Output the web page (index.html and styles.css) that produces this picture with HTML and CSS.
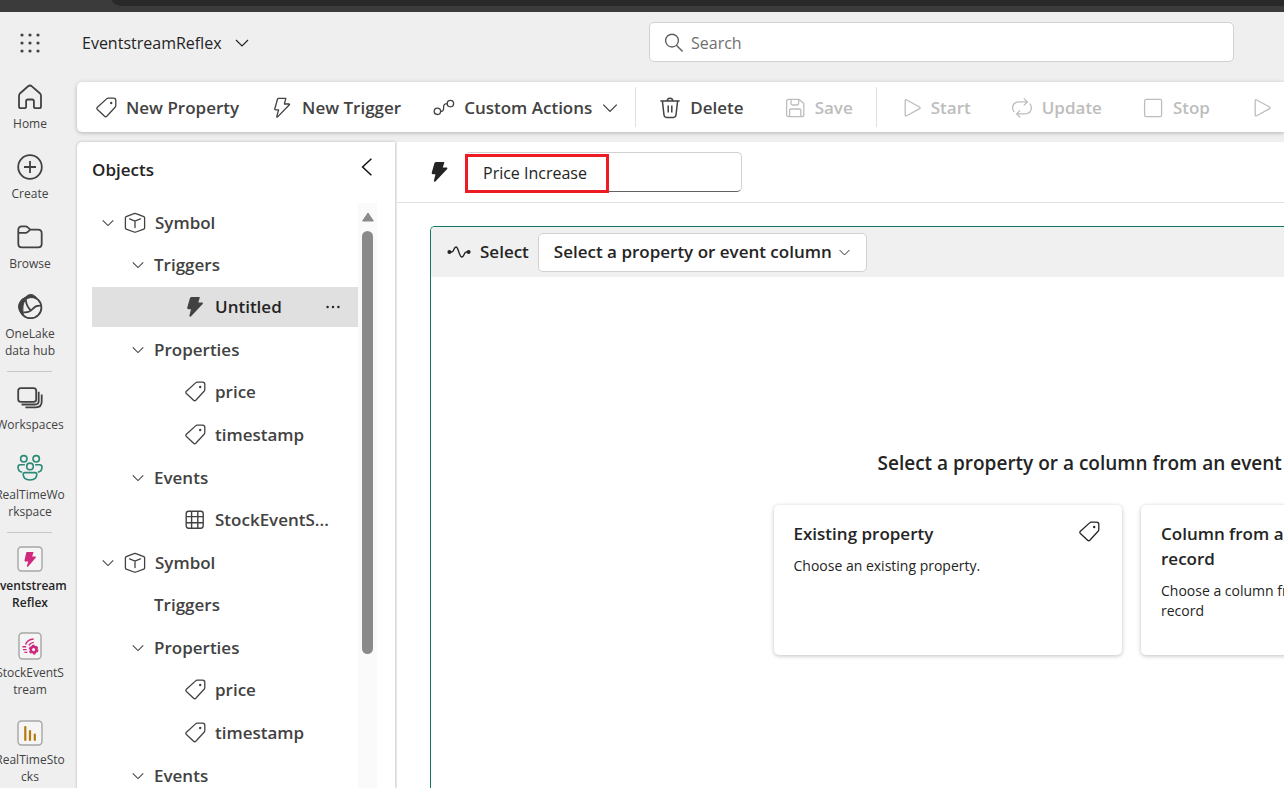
FILE: index.html
```html
<!DOCTYPE html>
<html lang="en">
<head>
<meta charset="utf-8">
<title>EventstreamReflex</title>
<link rel="stylesheet" href="styles.css">
</head>
<body>
<svg class="sprite" aria-hidden="true">
  <symbol id="tag" viewBox="0 0 22 22"><path d="M13.2 1.2H18.6Q20.8 1.2 20.8 3.4V8.6Q20.8 9.6 20.1 10.3L11.8 19.2Q10.7 20.3 9.6 19.2L2.4 12.5Q1.3 11.4 2.4 10.3L11.6 1.9Q12.3 1.2 13.2 1.2Z" fill="none" stroke="currentColor" stroke-width="1.3"/><circle cx="16.2" cy="6" r="1.2" fill="currentColor"/></symbol>
  <symbol id="bolt-line" viewBox="0 0 22 22"><path d="M7.6 1.3H14.8L13.4 7H18.2Q18.8 7.2 18.4 7.8L6.6 19.9Q5.6 20.5 5.8 19.3L7.6 12.8H4.6Q3.6 12.8 3.8 11.8L6.5 2.2Q6.8 1.3 7.6 1.3Z" fill="none" stroke="currentColor" stroke-width="1.3" stroke-linejoin="round"/></symbol>
  <symbol id="bolt" viewBox="0 0 22 22"><path d="M7.6 1H15.2Q16 1.2 15.7 2L14.3 6.6H18.3Q19.4 7 18.7 8L6.9 20.5Q5.4 21.3 5.4 19.6L7 13.2H4.4Q3 13 3.2 11.8L5.9 2.2Q6.4 1 7.6 1Z" fill="currentColor"/></symbol>
  <symbol id="chevron" viewBox="0 0 16 16"><path d="M2 5L8 11L14 5" fill="none" stroke="currentColor" stroke-width="1.2"/></symbol>
  <symbol id="cube" viewBox="0 0 22 22"><path d="M11 1.5Q11.5 1.5 12 1.7L19.8 4.6Q20.6 5 20.6 5.8V16Q20.6 16.8 19.8 17.1L12 20Q11 20.4 10 20L2.2 17.1Q1.4 16.8 1.4 16V5.8Q1.4 5 2.2 4.6L10 1.7Q10.5 1.5 11 1.5ZM5.6 6.8L11 9L16.4 6.8M11 9V15.6" fill="none" stroke="currentColor" stroke-width="1.3" stroke-linecap="round"/></symbol>
  <symbol id="play" viewBox="0 0 22 22"><path d="M5.2 3.8Q5.2 2.2 6.7 3L19.6 10Q20.8 10.8 19.6 11.6L6.7 18.7Q5.2 19.4 5.2 17.9Z" fill="none" stroke="currentColor" stroke-width="1.3"/></symbol>
</svg>

<div class="browser-bar"><div class="browser-tab"></div></div>
<div class="app">
  <nav class="rail" aria-label="Main">
    <button class="launcher" aria-label="Apps"><svg width="20" height="20" viewBox="0 0 20 20" fill="#424242"><circle cx="2" cy="2" r="1.6"/><circle cx="10" cy="2" r="1.6"/><circle cx="18" cy="2" r="1.6"/><circle cx="2" cy="10" r="1.6"/><circle cx="10" cy="10" r="1.6"/><circle cx="18" cy="10" r="1.6"/><circle cx="2" cy="18" r="1.6"/><circle cx="10" cy="18" r="1.6"/><circle cx="18" cy="18" r="1.6"/></svg></button>
    <a class="rail-item" href="#"><svg viewBox="0 0 28 28"><path d="M14 2.5Q15 2.5 15.9 3.3L23.8 10.2Q25 11.3 25 13V23.4Q25 25.2 23.2 25.2H19.7Q17.9 25.2 17.9 23.4V18.3Q17.9 16.5 16.1 16.5H11.9Q10.1 16.5 10.1 18.3V23.4Q10.1 25.2 8.3 25.2H4.8Q3 25.2 3 23.4V13Q3 11.3 4.2 10.2L12.1 3.3Q13 2.5 14 2.5Z" class="line"/></svg><span>Home</span></a>
    <a class="rail-item" href="#"><svg viewBox="0 0 28 28"><circle cx="14" cy="14" r="11.8" class="line"/><path d="M14 8V20M8 14H20" class="line"/></svg><span>Create</span></a>
    <a class="rail-item" href="#"><svg viewBox="0 0 28 28"><path d="M2.3 7Q2.3 3.4 5.9 3.4H9.6Q10.7 3.4 11.5 4.2L14.3 6.6H22.1Q25.7 6.6 25.7 10.2V20.8Q25.7 24.4 22.1 24.4H5.9Q2.3 24.4 2.3 20.8ZM2.3 9.8H9.6Q10.7 9.8 11.5 9.1L14.3 6.6" class="line"/></svg><span>Browse</span></a>
    <a class="rail-item" href="#"><svg viewBox="0 0 28 28"><circle cx="14.6" cy="14.4" r="10.8" class="line"/><path d="M9 4.6Q14.5 -1.5 20 4L20.4 5.6Q14 3 9.6 6.8Q5.6 11.4 7.4 21.6L5.6 20.6Q.6 15.5 3.6 9.4Q5.4 5.6 9 4.6Z" fill="currentColor" stroke="currentColor"/><path d="M9.8 6.8Q10.4 13.6 15.2 17.6M7.6 19.4Q13.6 19.8 16.8 15.8Q20 12 25 12.8" class="line"/></svg><span>OneLake<br>data hub</span></a>
    <hr class="rail-rule">
    <a class="rail-item" href="#"><svg viewBox="0 0 28 28"><rect x="2.2" y="4.2" width="18" height="13.6" rx="2.6" class="line"/><path d="M22.7 7.8V17Q22.7 20.5 19 20.5H5.5M25.7 10.5V17.5Q25.7 23.3 19.8 23.3H9.4" class="line"/></svg><span>Workspaces</span></a>
    <a class="rail-item" href="#"><svg viewBox="0 0 28 28" class="team"><circle cx="7.8" cy="4.8" r="3.2"/><circle cx="20.2" cy="4.8" r="3.2"/><circle cx="14" cy="12.4" r="3.3"/><path d="M8.9 10.8H4.4Q2 10.8 2 13.2Q2 17.4 6.2 18.2M19.1 10.8H23.6Q26 10.8 26 13.2Q26 17.4 21.8 18.2M8.9 18.6H19.1Q20.8 18.6 20.8 20.3Q20.8 26 14 26Q7.2 26 7.2 20.3Q7.2 18.6 8.9 18.6Z"/></svg><span>RealTimeWo<br>rkspace</span></a>
    <hr class="rail-rule">
    <a class="rail-item current" href="#" aria-current="page"><svg viewBox="0 0 28 28"><rect x="2" y="2" width="24" height="24" rx="3.5" class="tile"/><path d="M11 7H17.5L16.2 11.6H19.5Q20.2 12 19.7 12.8L12 21.8Q10.6 22.2 11 20.8L12.2 16.6H9.4Q8.3 16.4 8.5 15.3L10.2 7.8Q10.4 7 11 7Z" fill="#d0287f"/></svg><span>Eventstream<br>Reflex</span></a>
    <a class="rail-item" href="#"><svg viewBox="0 0 28 28"><rect x="3" y="1" width="22" height="26" rx="3.5" class="tile"/><g fill="none" stroke="#d0287f"><path d="M9.5 12.6Q11.5 7.4 17.6 7M12.8 13.4Q14.4 10.8 17.8 10.4M6.4 14.8H10.2M7 17.6H10.6M8.4 20.4H11.4" stroke-width="1.4"/><circle cx="17.6" cy="17.6" r="2.8" stroke-width="2.4"/><circle cx="17.6" cy="17.6" r="4.2" stroke-width="1.4" stroke-dasharray="2.6 1.8"/></g></svg><span>StockEventS<br>tream</span></a>
    <a class="rail-item" href="#"><svg viewBox="0 0 28 28"><rect x="2" y="2" width="24" height="24" rx="3.5" class="tile"/><path d="M9.3 8V21M14 12V21M18.8 15.5V21" stroke="#b8790e" stroke-width="2.2" stroke-linecap="round"/></svg><span>RealTimeSto<br>cks</span></a>
  </nav>

  <div class="content">
    <header class="topbar">
      <button class="title-button">EventstreamReflex <svg width="16" height="16"><use href="#chevron"/></svg></button>
      <label class="search"><svg width="20" height="20" viewBox="0 0 20 20" fill="none" stroke="#616161" stroke-width="1.4"><circle cx="8" cy="7.6" r="6.4"/><path d="M12.6 12.4L18.6 18.6"/></svg><input type="search" placeholder="Search" aria-label="Search"></label>
    </header>

    <div class="toolbar" role="toolbar" aria-label="Actions">
      <button class="tool"><svg><use href="#tag"/></svg>New Property</button>
      <button class="tool"><svg><use href="#bolt-line"/></svg>New Trigger</button>
      <button class="tool"><svg viewBox="0 0 22 22" fill="none" stroke="currentColor" stroke-width="1.3"><circle cx="4.4" cy="14.3" r="3.2"/><circle cx="17.4" cy="6.6" r="3.2"/><path d="M7.6 14.3Q10.6 14.6 10.6 11.6V9.6Q10.8 6.6 14.2 6.6"/></svg>Custom Actions<svg class="tool-chevron"><use href="#chevron"/></svg></button>
      <span class="tool-rule"></span>
      <div class="tool-group">
        <button class="tool"><svg viewBox="0 0 22 22" fill="none" stroke="currentColor" stroke-width="1.5"><path d="M1.4 4H20.6M8.2 4Q8.2 1.2 11 1.2Q13.8 1.2 13.8 4M3.4 4L5 18Q5.3 20.4 7.6 20.4H14.4Q16.7 20.4 17 18L18.6 4M9.2 8.5V15.6M12.8 8.5V15.6"/></svg>Delete</button>
        <button class="tool" disabled><svg viewBox="0 0 22 22" fill="none" stroke="currentColor" stroke-width="1.3"><path d="M4.6 2.4H15.2L19.8 6.6V17.4Q19.8 19.6 17.6 19.6H4.8Q2.6 19.6 2.6 17.4V4.6Q2.6 2.4 4.6 2.4ZM7 2.6V6.6Q7 8 8.4 8H13.2Q14.6 8 14.6 6.6V2.6M5.6 19.4V13.4Q5.6 12 7 12H15.4Q16.8 12 16.8 13.4V19.4"/></svg>Save</button>
      </div>
      <span class="tool-rule"></span>
      <div class="tool-group">
        <button class="tool" disabled><svg><use href="#play"/></svg>Start</button>
        <button class="tool" disabled><svg viewBox="0 0 22 22" fill="none" stroke="currentColor" stroke-width="1.3"><path d="M12.8 1.4L16.4 4.9L12.8 8.4M16 4.9H7.8Q1.6 5.4 1.6 11Q1.7 13.4 3.2 15.2M9.2 20.4L5.6 16.9L9.2 13.4M6 16.9H14.2Q20.4 16.4 20.4 10.8Q20.3 8.4 18.8 6.6"/></svg>Update</button>
        <button class="tool" disabled><svg viewBox="0 0 22 22" fill="none" stroke="currentColor" stroke-width="1.3"><rect x="2.6" y="2.4" width="17" height="17.2" rx="1.6"/></svg>Stop</button>
        <button class="tool" disabled aria-label="Run"><svg><use href="#play"/></svg></button>
      </div>
    </div>

    <div class="panels">
      <aside class="objects">
        <header class="objects-head"><h2>Objects</h2><button aria-label="Collapse"><svg width="12" height="18" viewBox="0 0 12 18"><path d="M10.4 .8L1.6 9L10.4 17.2" fill="none" stroke="#111" stroke-width="1.5"/></svg></button></header>
        <div class="objects-body">
          <ul class="tree">
            <li><div class="row"><svg class="twist"><use href="#chevron"/></svg><svg><use href="#cube"/></svg>Symbol</div>
              <ul>
                <li><div class="row level-2"><svg class="twist"><use href="#chevron"/></svg>Triggers</div>
                  <ul><li><div class="row level-3 selected"><svg><use href="#bolt"/></svg>Untitled<button class="more" aria-label="More options"><svg viewBox="0 0 16 16" fill="#242424"><circle cx="2.6" cy="8" r="1.2"/><circle cx="8" cy="8" r="1.2"/><circle cx="13.4" cy="8" r="1.2"/></svg></button></div></li></ul></li>
                <li><div class="row level-2"><svg class="twist"><use href="#chevron"/></svg>Properties</div>
                  <ul><li><div class="row level-3"><svg><use href="#tag"/></svg>price</div></li><li><div class="row level-3"><svg><use href="#tag"/></svg>timestamp</div></li></ul></li>
                <li><div class="row level-2"><svg class="twist"><use href="#chevron"/></svg>Events</div>
                  <ul><li><div class="row level-3"><svg viewBox="0 0 22 22" fill="none" stroke="currentColor" stroke-width="1.4"><rect x="2.2" y="2.2" width="17" height="17" rx="2.4"/><path d="M7.6 2.2V19.2M13.8 2.2V19.2M2.2 7.6H19.2M2.2 13.8H19.2"/></svg>StockEventS...</div></li></ul></li>
              </ul></li>
            <li><div class="row"><svg class="twist"><use href="#chevron"/></svg><svg><use href="#cube"/></svg>Symbol</div>
              <ul>
                <li><div class="row level-2 childless">Triggers</div></li>
                <li><div class="row level-2"><svg class="twist"><use href="#chevron"/></svg>Properties</div>
                  <ul><li><div class="row level-3"><svg><use href="#tag"/></svg>price</div></li><li><div class="row level-3"><svg><use href="#tag"/></svg>timestamp</div></li></ul></li>
                <li><div class="row level-2"><svg class="twist"><use href="#chevron"/></svg>Events</div></li>
              </ul></li>
          </ul>
          <div class="scrollbar"><svg width="12" height="10" viewBox="0 0 12 10"><path d="M6 1L11.4 9H.6Z" fill="#8a8a8a" stroke="#8a8a8a" stroke-linejoin="round"/></svg><div class="thumb"></div></div>
        </div>
      </aside>

      <main class="editor">
        <div class="name-bar">
          <svg class="name-icon"><use href="#bolt"/></svg>
          <div class="name-field"><input type="text" value="Price Increase" aria-label="Trigger name"><span class="callout"></span></div>
        </div>
        <section class="canvas">
          <div class="select-bar">
            <svg width="24" height="16" viewBox="0 0 24 16"><path d="M2 8H4.6C7.4 8 6.6 3 9 3C11.6 3 12 13 14.8 13C17.4 13 16.8 8 19.4 8H22" fill="none" stroke="#242424" stroke-width="1.4"/><circle cx="2.4" cy="8" r="2" fill="#242424"/><circle cx="21.6" cy="8" r="2" fill="#242424"/></svg>
            <label for="source">Select</label>
            <div class="dropdown"><select id="source"><option>Select a property or event column</option></select><svg><use href="#chevron"/></svg></div>
          </div>
          <div class="choices">
            <h1>Select a property or a column from an event</h1>
            <div class="cards">
              <button class="card"><span class="card-head"><strong>Existing property</strong><svg><use href="#tag"/></svg></span><span class="card-text">Choose an existing property.</span></button>
              <button class="card"><span class="card-head"><strong>Column from an event<br>record</strong></span><span class="card-text">Choose a column from an event<br>record</span></button>
            </div>
          </div>
        </section>
      </main>
    </div>
  </div>
</div>
</body>
</html>
```

FILE: styles.css
```css
* { box-sizing: border-box; }

:root { --semibold: 550; }

body {
  margin: 0;
  height: 100vh;
  display: flex;
  flex-direction: column;
  overflow: hidden;
  background: #efefef;
  color: #242424;
  font: 17px/24px "Open Sans", "Noto Sans", sans-serif;
}

button, input, select {
  font: inherit;
  color: inherit;
}

button {
  padding: 0;
  border: 0;
  background: none;
}

ul {
  margin: 0;
  padding: 0;
  list-style: none;
}

svg { flex: none; }

.sprite {
  position: absolute;
  width: 0;
  height: 0;
}

.browser-bar {
  flex: none;
  height: 12px;
  padding-left: 112px;
  background: #3b3b3b;
}

.browser-tab {
  height: 6px;
  border-bottom-left-radius: 10px 6px;
  background: #292929;
}

.app {
  flex: 1;
  min-height: 0;
  display: grid;
  grid-template-columns: 77px minmax(0, 1fr);
}

/* Navigation rail */
.rail {
  width: 60px;
  min-height: 0;
  display: flex;
  flex-direction: column;
}

.launcher {
  flex: none;
  height: 60px;
  margin-bottom: 2px;
}

.launcher svg { vertical-align: middle; }

.rail-item {
  flex: none;
  display: flex;
  flex-direction: column;
  align-items: center;
  gap: 4px;
  padding: 9px 0 12px;
  color: #424242;
  font-size: 12px;
  line-height: 17px;
  text-align: center;
  text-decoration: none;
  white-space: nowrap;
}

.rail-item svg {
  width: 28px;
  height: 28px;
}

.rail-item.current {
  color: #242424;
  font-weight: var(--semibold);
}

.line {
  fill: none;
  stroke: currentColor;
  stroke-width: 1.8;
}

.team {
  fill: none;
  stroke: #2a8a76;
  stroke-width: 1.6;
}

.tile {
  fill: #f5f5f5;
  stroke: #a6a6a6;
  stroke-width: 1.4;
}

.rail-rule {
  flex: none;
  width: 45px;
  height: 1px;
  margin: 0 0 3px 7px;
  border: 0;
  background: #c8c8c8;
}

/* Header */
.content {
  min-height: 0;
  display: flex;
  flex-direction: column;
}

.topbar {
  flex: none;
  height: 70px;
  display: flex;
  align-items: flex-start;
  justify-content: space-between;
  padding: 10px 50px 0 5px;
  font-size: 16px;
}

.title-button {
  display: flex;
  align-items: center;
  gap: 12px;
  height: 42px;
}

.search {
  width: calc(50% + 9px);
  height: 40px;
  display: flex;
  align-items: center;
  gap: 7px;
  padding: 2px 14px 0;
  border: 1px solid #d1d1d1;
  border-radius: 5px;
  background: #fff;
}

.search input {
  flex: 1;
  min-width: 0;
  padding: 0;
  border: 0;
  outline: 0;
  background: none;
}

.search input::placeholder { color: #707070; }

/* Toolbar */
.toolbar {
  flex: none;
  height: 50px;
  display: flex;
  align-items: center;
  margin-bottom: 10px;
  padding-left: 2px;
  overflow: clip;
  overflow-clip-margin: 6px;
  border-radius: 5px 0 0 5px;
  background: #fff;
  box-shadow: 0 1px 4px rgba(0, 0, 0, .25);
}

.tool {
  flex: none;
  display: flex;
  align-items: center;
  gap: 9px;
  padding: 2px 16px 0;
  color: #424242;
  font-weight: var(--semibold);
  white-space: nowrap;
}

.tool svg {
  width: 22px;
  height: 22px;
}

.tool .tool-chevron {
  width: 18px;
  height: 18px;
}

.tool-group {
  display: flex;
  padding: 0 3px;
}

.tool-group .tool { padding: 2px 20px 0; }
.tool:disabled { color: #bdbdbd; }

.tool-rule {
  flex: none;
  width: 1px;
  height: 40px;
  background: #e0e0e0;
}

/* Objects panel */
.panels {
  flex: 1;
  min-height: 0;
  display: flex;
  gap: 2px;
}

.objects {
  flex: none;
  width: 318px;
  display: flex;
  flex-direction: column;
  border-top-left-radius: 5px;
  background: #fff;
  box-shadow: 0 0 3px rgba(0, 0, 0, .25);
}

.objects-head {
  flex: none;
  height: 61px;
  display: flex;
  align-items: flex-start;
  justify-content: space-between;
  padding: 16px 22px 0 15px;
}

.objects-head h2 {
  margin: 0;
  font-size: 17px;
  font-weight: var(--semibold);
}

.objects-body {
  flex: 1;
  min-height: 0;
  display: flex;
  padding-left: 15px;
}

.tree {
  flex: 1;
  overflow: hidden;
}

.tree li + li { margin-top: 3px; }
.tree ul { margin-top: 2px; }

.row {
  height: 40px;
  display: flex;
  align-items: center;
  gap: 9px;
  padding-left: 9px;
  color: #424242;
  font-weight: var(--semibold);
}

.row svg {
  width: 22px;
  height: 22px;
}

.row .twist {
  width: 14px;
  height: 14px;
}

.level-2 { padding-left: 39px; }
.level-2.childless { padding-left: 62px; }
.level-3 { padding-left: 92px; }

.selected {
  background: #e0e0e0;
  color: #242424;
}

.selected > svg { color: #424242; }

.more {
  margin-left: auto;
  padding-right: 17px;
}

.more svg {
  display: block;
  width: 16px;
  height: 16px;
}

.scrollbar {
  flex: none;
  width: 19px;
  margin-right: 18px;
  display: flex;
  flex-direction: column;
  align-items: center;
  gap: 9px;
  padding-top: 9px;
  background: #fafafa;
}

.thumb {
  width: 11px;
  height: calc(100% - 153px);
  border-radius: 6px;
  background: #8a8a8a;
}

/* Editor */
.editor {
  flex: 1;
  min-width: 0;
  display: flex;
  flex-direction: column;
  overflow: hidden;
  background: #fff;
}

.name-bar {
  flex: none;
  height: 61px;
  display: flex;
  align-items: center;
  gap: 14px;
  padding-left: 31px;
  border-bottom: 1px solid #e0e0e0;
}

.name-icon {
  width: 23px;
  height: 22px;
}

.name-field {
  position: relative;
  width: 277px;
}

.name-field input {
  display: block;
  width: 100%;
  height: 40px;
  padding: 2px 17px 0;
  border: 1px solid #d1d1d1;
  border-bottom-color: #616161;
  border-radius: 5px;
  font-size: 16px;
}

.callout {
  position: absolute;
  top: 2px;
  left: 0;
  width: 144px;
  height: 39px;
  border: 3px solid #ed1c24;
}

.canvas {
  flex: 1;
  min-width: 1402px;
  margin: 23px 0 0 33px;
  display: flex;
  flex-direction: column;
  border: 1px solid #117865;
  border-width: 1px 0 0 1px;
  border-top-left-radius: 5px;
  overflow: hidden;
}

.select-bar {
  flex: none;
  height: 50px;
  display: flex;
  align-items: center;
  gap: 9px;
  padding-left: 16px;
  background: #f0f0f0;
  font-weight: var(--semibold);
}

.dropdown {
  position: relative;
}

.dropdown select {
  display: block;
  height: 39px;
  padding: 0 34px 0 15px;
  border: 1px solid #d1d1d1;
  border-radius: 5px;
  appearance: none;
  background: #fff;
}

.dropdown svg {
  position: absolute;
  top: 13px;
  right: 16px;
  width: 13px;
  height: 13px;
  pointer-events: none;
}

.choices {
  width: 716px;
  margin: 0 auto;
  padding-top: 172px;
}

.choices h1 {
  margin: 0 0 28px;
  padding-left: 104px;
  font-size: 19px;
  line-height: 28px;
  font-weight: var(--semibold);
  white-space: nowrap;
}

.cards {
  display: grid;
  grid-template-columns: 1fr 1fr;
  gap: 19px;
}

.card {
  height: 150px;
  display: flex;
  flex-direction: column;
  gap: 10px;
  padding: 16px 22px 16px 20px;
  border-radius: 5px;
  background: #fff;
  box-shadow: 0 1px 4px rgba(0, 0, 0, .25);
  text-align: left;
}

.card-head {
  display: flex;
  justify-content: space-between;
  line-height: 25px;
}

.card-head strong { font-weight: var(--semibold); }

.card-head svg {
  width: 22px;
  height: 22px;
}

.card-text {
  font-size: 14px;
  line-height: 20px;
}
```
